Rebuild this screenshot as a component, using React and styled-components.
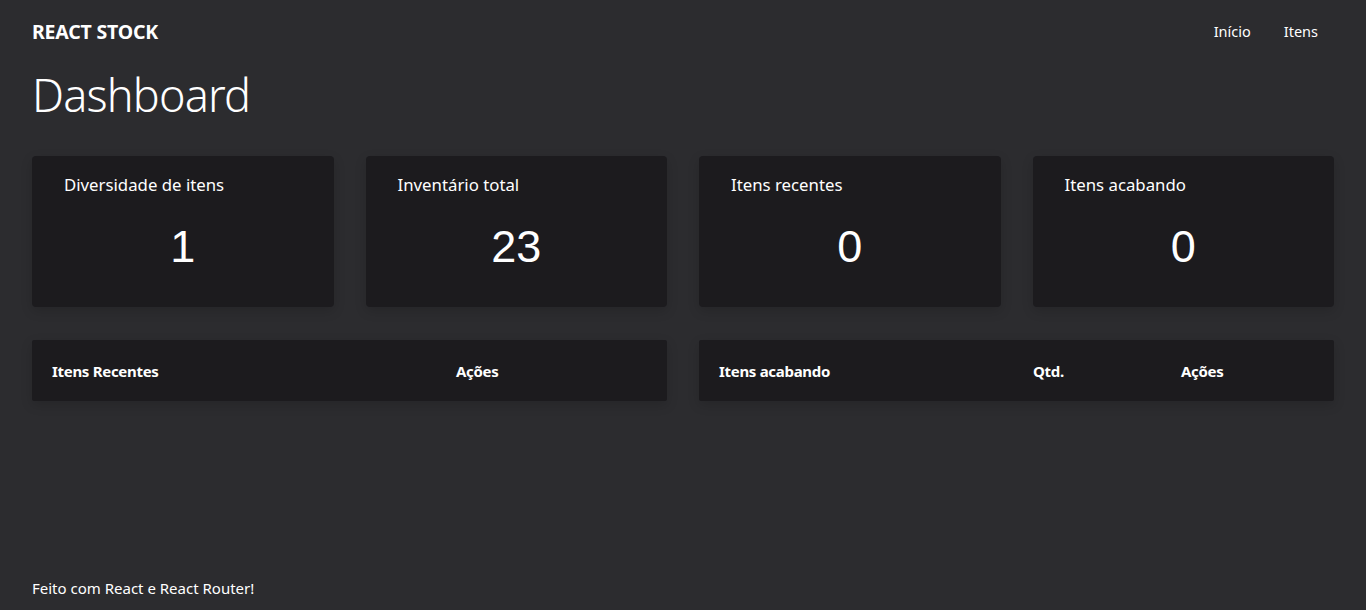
import React from "react";
import styled, { createGlobalStyle } from "styled-components";

const GlobalStyle = createGlobalStyle`
  * { box-sizing: border-box; }
  body {
    margin: 0;
    background: #2c2c2f;
    color: #ffffff;
    font-family: "Noto Sans", "Open Sans", sans-serif;
  }
`;

const Page = styled.div`
  min-height: 100vh;
  display: flex;
  flex-direction: column;
  padding: 0 32px;
`;

const Header = styled.header`
  display: flex;
  align-items: center;
  justify-content: space-between;
  height: 62px;
`;

const Brand = styled.div`
  font-size: 19.5px;
  font-weight: 700;
  letter-spacing: -0.2px;
`;

const Nav = styled.nav`
  display: flex;
  gap: 33px;
  padding-right: 16px;
  font-size: 14.5px;
`;

const NavLink = styled.a`
  color: #fff;
  text-decoration: none;
`;

const Title = styled.h1`
  margin: 0;
  font-size: 45px;
  font-weight: 300;
  line-height: 66px;
  letter-spacing: -0.8px;
`;

const Cards = styled.section`
  display: grid;
  grid-template-columns: repeat(4, 1fr);
  gap: 32px;
  margin-top: 28px;
`;

const Card = styled.div`
  background: #1c1b1e;
  border-radius: 4px;
  height: 151px;
  padding: 16px 32px;
  box-shadow: 0 4px 12px rgba(0, 0, 0, 0.15);
`;

const CardLabel = styled.div`
  font-size: 16.8px;
  line-height: 26px;
`;

const CardValue = styled.div`
  text-align: center;
  font-family: "Liberation Sans", Arial, sans-serif;
  font-size: 45px;
  line-height: 52px;
  margin-top: 23px;
`;

const Tables = styled.section`
  display: grid;
  grid-template-columns: 1fr 1fr;
  gap: 32px;
  margin-top: 33px;
`;

const Table = styled.div`
  background: #1c1b1e;
  border-radius: 2px;
  height: 61px;
  display: grid;
  grid-template-columns: ${(p) => p.$cols};
  align-items: center;
  padding: 0 20px;
  box-shadow: 0 4px 12px rgba(0, 0, 0, 0.15);
`;

const Th = styled.div`
  font-size: 15px;
  font-weight: 700;
  letter-spacing: -0.3px;
`;

const Footer = styled.footer`
  margin-top: auto;
  padding-bottom: 12px;
  font-size: 15px;
`;

const stats = [
  { label: "Diversidade de itens", value: 1 },
  { label: "Inventário total", value: 23 },
  { label: "Itens recentes", value: 0 },
  { label: "Itens acabando", value: 0 },
];

export default function App() {
  return (
    <>
      <GlobalStyle />
      <Page>
        <Header>
          <Brand>REACT STOCK</Brand>
          <Nav>
            <NavLink href="#">Início</NavLink>
            <NavLink href="#">Itens</NavLink>
          </Nav>
        </Header>
        <Title>Dashboard</Title>
        <Cards>
          {stats.map((s) => (
            <Card key={s.label}>
              <CardLabel>{s.label}</CardLabel>
              <CardValue>{s.value}</CardValue>
            </Card>
          ))}
        </Cards>
        <Tables>
          <Table $cols="404px 1fr">
            <Th>Itens Recentes</Th>
            <Th>Ações</Th>
          </Table>
          <Table $cols="314px 148px 1fr">
            <Th>Itens acabando</Th>
            <Th>Qtd.</Th>
            <Th>Ações</Th>
          </Table>
        </Tables>
        <Footer>Feito com React e React Router!</Footer>
      </Page>
    </>
  );
}
